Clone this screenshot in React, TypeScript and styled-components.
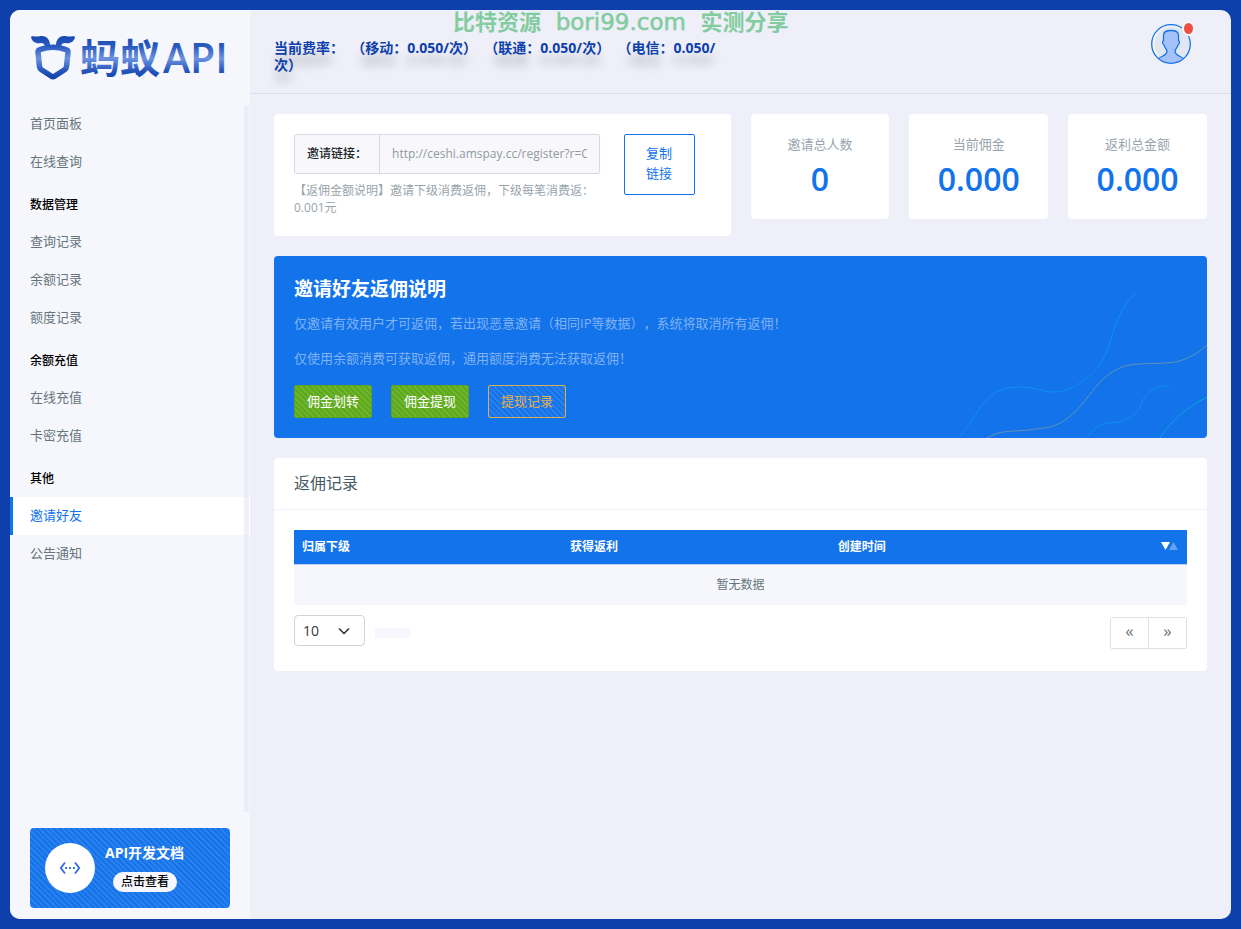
import React from 'react';
import styled, { createGlobalStyle, css } from 'styled-components';

const blue = '#1273eb';
const sans = `'Open Sans', 'Noto Sans CJK SC', sans-serif`;

const stripes = (a: string, b: string) => css`
  background: repeating-linear-gradient(45deg, ${a} 0 2px, ${b} 2px 4px);
`;

const GlobalStyle = createGlobalStyle`
  *, *::before, *::after { box-sizing: border-box; }
  body {
    margin: 0;
    background: #0d40aa;
    font-family: ${sans};
    font-size: 13px;
    line-height: 20px;
    color: #67757c;
    text-spacing-trim: space-all;
  }
  button, input, select { font-family: inherit; }
  h1, h2, h3, p, ul { margin: 0; padding: 0; }
`;

const Shell = styled.div`
  display: flex;
  min-height: calc(100vh - 20px);
  margin: 10px;
  border-radius: 10px;
  overflow: hidden;
  background: #eeeff8;
`;

const Sidebar = styled.aside`
  display: flex;
  flex-direction: column;
  flex: 0 0 240px;
  background: #f6f7fd;
`;

const Brand = styled.a`
  display: block;
  height: 95px;
  padding: 20px;
  svg { display: block; overflow: visible; }
`;

const Nav = styled.nav`
  flex: 1;
  position: relative;
  &::after {
    content: '';
    position: absolute;
    top: 0;
    right: 1px;
    bottom: 0;
    width: 5px;
    background: rgba(228, 229, 243, 0.55);
  }
`;

const NavList = styled.ul`
  list-style: none;
`;

const NavHeading = styled.li`
  padding: 14px 20px 8px;
  font-size: 12px;
  font-weight: 500;
  color: #000;
`;

const NavLink = styled.a<{ $active?: boolean }>`
  display: block;
  padding: 8px 20px 10px 17px;
  border-left: 3px solid ${p => (p.$active ? blue : 'transparent')};
  background: ${p => (p.$active ? '#fff' : 'transparent')};
  color: ${p => (p.$active ? blue : '#67757c')};
  text-decoration: none;
`;

const DocsCard = styled.section`
  display: flex;
  gap: 10px;
  height: 80px;
  margin: 16px 20px 11px;
  padding: 15px;
  border-radius: 4px;
  ${stripes('#1273eb', '#2b80ec')}
`;

const DocsIcon = styled.span`
  display: flex;
  align-items: center;
  justify-content: center;
  flex: 0 0 50px;
  height: 50px;
  border-radius: 50%;
  background: #fff;
`;

const DocsTitle = styled.h3`
  font-size: 14px;
  line-height: 20px;
  font-weight: 700;
  color: #fff;
`;

const DocsLink = styled.a`
  display: inline-block;
  margin: 9px 0 0 8px;
  padding: 0 8px;
  border-radius: 10px;
  background: #f6f7fd;
  font-size: 12px;
  line-height: 20px;
  font-weight: 500;
  color: #000;
  text-decoration: none;
`;

const Main = styled.main`
  position: relative;
  flex: 1;
  min-width: 0;
`;

const Notice = styled.div`
  position: absolute;
  top: 0;
  left: 0;
  right: 0;
  padding-left: 203px;
  font-family: 'DejaVu Sans', 'Noto Sans CJK SC', sans-serif;
  font-size: 23px;
  line-height: 24px;
  color: #82cc9f;
  white-space: pre;
  pointer-events: none;
  -webkit-text-stroke: 0.5px #82cc9f;
  b {
    font-size: 22px;
    font-weight: 700;
    -webkit-text-stroke: 0;
  }
`;

const Header = styled.header`
  display: flex;
  justify-content: space-between;
  min-height: 84px;
  padding: 14px 40px 14px 24px;
  border-bottom: 1px solid #dddee9;
`;

const Rates = styled.p`
  max-width: 457px;
  padding-top: 15px;
  font-size: 14px;
  line-height: 17px;
  font-weight: 700;
  color: #0d40aa;
  text-shadow: 0 12px 10px rgba(0, 0, 0, 0.2);
  white-space: pre-wrap;
`;

const AvatarButton = styled.button`
  position: relative;
  width: 40px;
  height: 40px;
  padding: 0;
  border: 0;
  background: none;
  svg { display: block; }
`;

const AvatarBadge = styled.span`
  position: absolute;
  top: -3px;
  right: -4px;
  width: 13px;
  height: 15px;
  border: 2px solid #f6f7fd;
  border-radius: 50%;
  background: #ee4f3f;
`;

const Content = styled.div`
  display: grid;
  gap: 20px;
  padding: 20px 24px;
`;

const TopGrid = styled.div`
  display: grid;
  grid-template-columns: repeat(12, minmax(0, 1fr));
  gap: 20px;
  align-items: start;
`;

const Card = styled.section`
  border-radius: 4px;
  background: #fff;
`;

const InviteCard = styled(Card)`
  grid-column: span 6;
  display: grid;
  grid-template-columns: minmax(0, 1fr) 87px;
  gap: 24px;
  align-items: start;
  padding: 20px;
`;

const InputGroup = styled.div`
  display: flex;
  height: 40px;
  border: 1px solid #d9d8e8;
  border-radius: 2px;
  background: #f8f8fb;
`;

const InputLabel = styled.label`
  padding: 0 12px;
  border-right: 1px solid #d9d8e8;
  font-size: 12px;
  line-height: 38px;
  font-weight: 500;
  color: #212529;
  white-space: nowrap;
`;

const LinkInput = styled.input`
  flex: 1;
  min-width: 0;
  padding: 0 12px 1px;
  border: 0;
  background: transparent;
  font-size: 12px;
  color: #8f9a9f;
`;

const Help = styled.p`
  margin-top: 8px;
  font-size: 12px;
  line-height: 17px;
  color: #99a4ac;
`;

const CopyButton = styled.button`
  width: 71px;
  padding: 8px 20px 11px;
  border: 1px solid ${blue};
  border-radius: 2px;
  background: #fff;
  font-size: 13px;
  line-height: 20px;
  color: ${blue};
`;

const Stat = styled(Card)`
  grid-column: span 2;
  padding: 20px;
  text-align: center;
`;

const StatLabel = styled.p`
  line-height: 20px;
  color: #99a4ac;
`;

const StatValue = styled.p`
  margin-top: 5px;
  font-size: 32px;
  line-height: 40px;
  font-weight: 600;
  color: ${blue};
`;

const Banner = styled.section`
  position: relative;
  padding: 20px;
  border-radius: 4px;
  overflow: hidden;
  background: ${blue};
`;

const BannerTitle = styled.h2`
  margin-bottom: 11px;
  font-size: 19px;
  line-height: 26px;
  font-weight: 700;
  color: #fff;
`;

const BannerText = styled.p`
  margin-bottom: 15px;
  color: #80b2f4;
`;

const BannerActions = styled.div`
  display: flex;
  gap: 19px;
  padding-top: 2px;
`;

const ActionButton = styled.button<{ $outline?: boolean }>`
  padding: 5px 12px 6px;
  border: 1px solid ${p => (p.$outline ? '#d9b050' : '#5aa51c')};
  border-radius: 2px;
  font-size: 13px;
  line-height: 20px;
  color: ${p => (p.$outline ? '#e5b04c' : '#fff')};
  ${p => (p.$outline ? stripes('#1273eb', '#2b80ec') : stripes('#5da91b', '#6eb42c'))}
  background-origin: border-box;
`;

const Waves = styled.svg`
  position: absolute;
  right: 0;
  bottom: 0;
`;

const CardTitle = styled.h2`
  padding: 14px 20px 15px;
  border-bottom: 1px solid #f1f1f6;
  font-size: 16px;
  line-height: 22px;
  font-weight: 400;
  color: #455a64;
`;

const CardBody = styled.div`
  padding: 20px 20px 22px;
`;

const Table = styled.table`
  width: 100%;
  border-collapse: collapse;
  table-layout: fixed;
  font-size: 12px;
`;

const Th = styled.th<{ $width: string }>`
  width: ${p => p.$width};
  height: 34px;
  padding: 0 8px;
  border-bottom: 1px solid #bccdf2;
  background: ${blue};
  background-clip: padding-box;
  text-align: left;
  font-weight: 700;
  color: #fff;
`;

const ThContent = styled.div`
  display: flex;
  justify-content: space-between;
  align-items: center;
`;

const EmptyCell = styled.td`
  height: 41px;
  padding: 0;
  background: #f6f7fd;
  text-align: center;
`;

const TableFooter = styled.div`
  display: flex;
  align-items: flex-start;
  gap: 10px;
  padding-top: 10px;
`;

const SelectWrap = styled.span`
  position: relative;
  display: block;
  svg {
    position: absolute;
    top: 10px;
    right: 15px;
    pointer-events: none;
  }
`;

const PageSize = styled.select`
  display: block;
  appearance: none;
  width: 71px;
  height: 31px;
  padding: 0 8px;
  border: 1px solid #ced4da;
  border-radius: 4px;
  background: #fff;
  font-size: 14px;
  color: #343a40;
`;

const PageInfo = styled.span`
  width: 35px;
  height: 10px;
  margin-top: 13px;
  border-radius: 2px;
  background: #f6f7fd;
`;

const Pager = styled.nav`
  display: flex;
  margin: 2px 0 0 auto;
  border: 1px solid #dee2e6;
  border-radius: 2px;
`;

const PageButton = styled.button`
  width: 37px;
  height: 30px;
  padding: 0 0 4px;
  border: 0;
  background: #fff;
  font-size: 17px;
  line-height: 26px;
  color: #67757c;
  & + & {
    width: 38px;
    border-left: 1px solid #dee2e6;
  }
`;

const Logo = () => (
  <svg width="200" height="56" viewBox="0 0 200 56" role="img" aria-label="蚂蚁API">
    <defs>
      <linearGradient id="logoFill" gradientUnits="userSpaceOnUse" x1="0" y1="6" x2="0" y2="49">
        <stop offset="0" stopColor="#1547b1" />
        <stop offset="0.25" stopColor="#2a5bc0" />
        <stop offset="0.52" stopColor="#6c92e0" />
        <stop offset="0.8" stopColor="#2757bd" />
        <stop offset="1" stopColor="#0f3fab" />
      </linearGradient>
    </defs>
    <g fill="url(#logoFill)">
      <path d="M1 7c0-1 2-1 4-.6 3 .4 5-.4 7-.4 5 0 8.500 4 8 11h-5c0-2.500-1.500-4-4-4-5 1-9-1-10-6z" />
      <path d="M45 7c0-1-2-1-4-.6-3 .4-5-.4-7-.4-5 0-8.500 4-8 11h5c0-2.500 1.500-4 4-4 5 1 9-1 10-6z" />
      <path
        d="M8 22q0-2 2-2.400q13-4.500 26 0q2 .4 2 2.400l-1.500 14.500q-.2 2-2 3.200l-10 6.500q-1.500 1-3 0l-10-6.500q-1.800-1.200-2-3.200z"
        fill="none"
        stroke="url(#logoFill)"
        strokeWidth="5.500"
      />
      <text x="50" y="43" fontFamily="'Noto Sans CJK SC', sans-serif" fontSize="40" fontWeight="700">蚂蚁</text>
      <text x="133" y="43" fontFamily="'Open Sans', sans-serif" fontSize="41" fontWeight="600">API</text>
    </g>
  </svg>
);

const Avatar = () => (
  <svg width="40" height="40" viewBox="0 0 40 40" aria-hidden="true">
    <defs>
      <clipPath id="avatarClip"><circle cx="20" cy="20" r="19" /></clipPath>
    </defs>
    <circle cx="20" cy="20" r="19.500" fill="#f2f5fa" />
    <circle cx="21" cy="20" r="17.500" fill="#e1e7f1" />
    <path
      clipPath="url(#avatarClip)"
      d="M12.500 11c0-3 2.500-4.500 7.500-4.500s7.500 1.500 7.500 4.500v5.500c1.500.5 1 4-.5 4.500-.3 2.500-3 4-3 6.500 0 3.500 5 4.500 8.500 7l-4 6H11.500l-4-6c3.500-2.500 8.500-3.500 8.500-7 0-2.500-2.700-4-3-6.500-1.500-.5-2-4-.5-4.500z"
      fill="#a4c2f7"
      stroke={blue}
      strokeWidth="1.300"
    />
    <circle cx="20" cy="20" r="19.300" fill="none" stroke={blue} strokeWidth="1.300" />
  </svg>
);

const CodeIcon = () => (
  <svg width="22" height="14" viewBox="0 0 22 14" fill="none" stroke="#2e6be0" strokeWidth="1.800" aria-hidden="true">
    <path d="M6 1.500L1.800 7 6 12.500M16 1.500L20.200 7 16 12.500" />
    <path d="M6.200 7h1.800M10.100 7h1.800M14 7h1.800" />
  </svg>
);

const SortIcon = () => (
  <svg width="18" height="10" viewBox="0 0 18 10" aria-hidden="true">
    <path d="M0 0h9L4.500 8z" fill="#fff" />
    <path d="M8 8h9L12.500 0z" fill="#64a2f2" />
  </svg>
);

type Item = { label: string; heading?: boolean; active?: boolean };

const menu: Item[] = [
  { label: '首页面板' },
  { label: '在线查询' },
  { label: '数据管理', heading: true },
  { label: '查询记录' },
  { label: '余额记录' },
  { label: '额度记录' },
  { label: '余额充值', heading: true },
  { label: '在线充值' },
  { label: '卡密充值' },
  { label: '其他', heading: true },
  { label: '邀请好友', active: true },
  { label: '公告通知' },
];

const stats = [
  { label: '邀请总人数', value: '0' },
  { label: '当前佣金', value: '0.000' },
  { label: '返利总金额', value: '0.000' },
];

export default function App() {
  return (
    <>
      <GlobalStyle />
      <Shell>
        <Sidebar>
          <Brand href="#"><Logo /></Brand>
          <Nav>
            <NavList>
              {menu.map(item =>
                item.heading ? (
                  <NavHeading key={item.label}>{item.label}</NavHeading>
                ) : (
                  <li key={item.label}>
                    <NavLink href="#" $active={item.active}>{item.label}</NavLink>
                  </li>
                )
              )}
            </NavList>
          </Nav>
          <DocsCard>
            <DocsIcon><CodeIcon /></DocsIcon>
            <div>
              <DocsTitle>API开发文档</DocsTitle>
              <DocsLink href="#">点击查看</DocsLink>
            </div>
          </DocsCard>
        </Sidebar>
        <Main>
          <Notice><b>比特资源</b>{'  '}bori99.com{'  '}<b>实测分享</b></Notice>
          <Header>
            <Rates>{'当前费率：  （移动：0.050/次）  （联通：0.050/次）  （电信：0.050/次）'}</Rates>
            <AvatarButton type="button" aria-label="账户">
              <Avatar />
              <AvatarBadge />
            </AvatarButton>
          </Header>
          <Content>
            <TopGrid>
              <InviteCard>
                <div>
                  <InputGroup>
                    <InputLabel htmlFor="invite">邀请链接：</InputLabel>
                    <LinkInput id="invite" readOnly defaultValue="http://ceshi.amspay.cc/register?r=C" />
                  </InputGroup>
                  <Help>【返佣金额说明】邀请下级消费返佣，下级每笔消费返：0.001元</Help>
                </div>
                <CopyButton type="button">复制链接</CopyButton>
              </InviteCard>
              {stats.map(s => (
                <Stat key={s.label}>
                  <StatLabel>{s.label}</StatLabel>
                  <StatValue>{s.value}</StatValue>
                </Stat>
              ))}
            </TopGrid>
            <Banner>
              <Waves width="260" height="182" viewBox="0 0 260 182" fill="none" aria-hidden="true">
                <path d="M12 182L30 157C38 141 52 131 73 131C90 131 95 136 107 136C131 136 157 111 163 87C167 69 175 50 188 37" stroke="#0d92f0" />
                <path d="M40 182C53 174 62 176 82 174C102 171 110 173 130 154C147 136 158 109 192 108C207 107 214 108 228 106C242 103 251 97 260 89" stroke="#6493b4" />
                <path d="M140 182C145 174 153 167 163 167C176 167 189 160 193 151C195 143 204 129 222 130" stroke="#0d92f0" />
                <path d="M213 182C225 164 240 151 260 141" stroke="#0fa5dc" />
              </Waves>
              <BannerTitle>邀请好友返佣说明</BannerTitle>
              <BannerText>仅邀请有效用户才可返佣，若出现恶意邀请（相同IP等数据），系统将取消所有返佣！</BannerText>
              <BannerText>仅使用余额消费可获取返佣，通用额度消费无法获取返佣！</BannerText>
              <BannerActions>
                <ActionButton type="button">佣金划转</ActionButton>
                <ActionButton type="button">佣金提现</ActionButton>
                <ActionButton type="button" $outline>提现记录</ActionButton>
              </BannerActions>
            </Banner>
            <Card>
              <CardTitle>返佣记录</CardTitle>
              <CardBody>
                <Table>
                  <thead>
                    <tr>
                      <Th $width="30%">归属下级</Th>
                      <Th $width="30%">获得返利</Th>
                      <Th $width="40%"><ThContent>创建时间<SortIcon /></ThContent></Th>
                    </tr>
                  </thead>
                  <tbody>
                    <tr><EmptyCell colSpan={3}>暂无数据</EmptyCell></tr>
                  </tbody>
                </Table>
                <TableFooter>
                  <SelectWrap>
                    <PageSize aria-label="每页条数" defaultValue="10">
                      <option>10</option>
                      <option>25</option>
                      <option>50</option>
                    </PageSize>
                    <svg width="12" height="12" viewBox="0 0 12 12" fill="none" stroke="#343a40" strokeWidth="1.700" strokeLinecap="round" strokeLinejoin="round" aria-hidden="true">
                      <path d="M1.500 4L6 8.500 10.500 4" />
                    </svg>
                  </SelectWrap>
                  <PageInfo />
                  <Pager aria-label="分页">
                    <PageButton type="button">«</PageButton>
                    <PageButton type="button">»</PageButton>
                  </Pager>
                </TableFooter>
              </CardBody>
            </Card>
          </Content>
        </Main>
      </Shell>
    </>
  );
}
